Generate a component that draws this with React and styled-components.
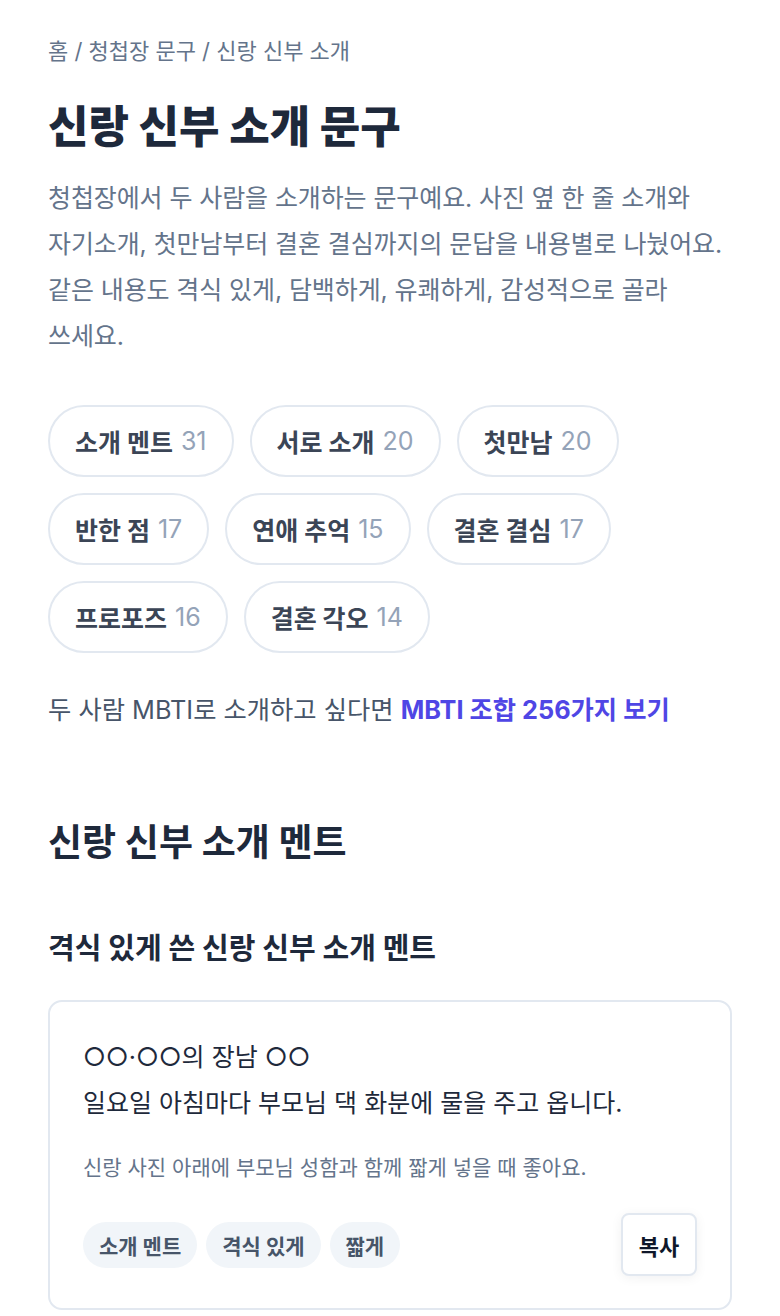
import React from "react";
import styled, { createGlobalStyle } from "styled-components";

const GlobalStyle = createGlobalStyle`
  body {
    margin: 0;
    background: #ffffff;
    font-family: Inter, "Noto Sans CJK KR", sans-serif;
    -webkit-font-smoothing: antialiased;
    word-break: keep-all;
  }
`;

const Page = styled.main`
  padding: 36px 48px 40px;
  box-sizing: border-box;
  width: 780px;
`;

const Breadcrumb = styled.nav`
  font-size: 22px;
  line-height: 30px;
  color: #64748b;
`;

const Title = styled.h1`
  margin: 34px 0 0;
  font-size: 44px;
  line-height: 54px;
  font-weight: 800;
  color: #1e293b;
`;

const Lead = styled.p`
  margin: 21px 0 0;
  font-size: 25px;
  line-height: 46px;
  color: #64748b;
  letter-spacing: -0.1px;
`;

const ChipList = styled.div`
  margin-top: 46px;
  display: flex;
  flex-wrap: wrap;
  gap: 16px;
  max-width: 620px;
`;

const Chip = styled.button`
  height: 72px;
  padding: 0 25px;
  display: inline-flex;
  align-items: center;
  gap: 8px;
  border: 2px solid #e2e8f0;
  border-radius: 999px;
  background: #fff;
  font-family: inherit;
  font-size: 25px;
  font-weight: 700;
  color: #3b4556;
  cursor: pointer;
`;

const Count = styled.span`
  font-weight: 400;
  color: #94a3b8;
`;

const MbtiLine = styled.p`
  margin: 40px 0 0;
  font-size: 25.3px;
  line-height: 34px;
  color: #475569;
`;

const MbtiLink = styled.a`
  color: #4f46e5;
  font-weight: 700;
  text-decoration: none;
`;

const SectionTitle = styled.h2`
  margin: 92px 0 0;
  font-size: 37px;
  line-height: 48px;
  font-weight: 700;
  color: #1e293b;
`;

const SubTitle = styled.h3`
  margin: 63px 0 0;
  font-size: 29px;
  line-height: 38px;
  font-weight: 700;
  color: #1e293b;
`;

const Card = styled.article`
  margin-top: 32px;
  border: 2px solid #e2e8f0;
  border-radius: 14px;
  padding: 32px 33px;
  display: flex;
  flex-direction: column;
`;

const Phrase = styled.p`
  margin: 0;
  font-size: 25px;
  line-height: 46px;
  color: #1e293b;
`;

const Note = styled.p`
  margin: 27px 0 0;
  font-size: 21px;
  line-height: 30px;
  color: #64748b;
`;

const Footer = styled.div`
  margin-top: 30px;
  display: flex;
  align-items: center;
  justify-content: space-between;
`;

const Tags = styled.div`
  display: flex;
  gap: 9px;
`;

const Tag = styled.span`
  height: 46px;
  padding: 0 16px;
  display: inline-flex;
  align-items: center;
  border-radius: 999px;
  background: #f1f5f9;
  font-size: 21px;
  font-weight: 700;
  color: #475569;
`;

const CopyButton = styled.button`
  width: 76px;
  height: 63px;
  border: 2px solid #e2e8f0;
  border-radius: 8px;
  background: #fff;
  box-shadow: 0 2px 12px rgba(15, 23, 42, 0.06);
  font-family: inherit;
  font-size: 22px;
  font-weight: 700;
  color: #0f172a;
  cursor: pointer;
`;

const chips = [
  ["소개 멘트", 31],
  ["서로 소개", 20],
  ["첫만남", 20],
  ["반한 점", 17],
  ["연애 추억", 15],
  ["결혼 결심", 17],
  ["프로포즈", 16],
  ["결혼 각오", 14],
];

export default function App() {
  return (
    <Page>
      <GlobalStyle />
      <Breadcrumb>홈 / 청첩장 문구 / 신랑 신부 소개</Breadcrumb>
      <Title>신랑 신부 소개 문구</Title>
      <Lead>
        청첩장에서 두 사람을 소개하는 문구예요. 사진 옆 한 줄 소개와
        자기소개, 첫만남부터 결혼 결심까지의 문답을 내용별로 나눴어요.
        같은 내용도 격식 있게, 담백하게, 유쾌하게, 감성적으로 골라
        쓰세요.
      </Lead>
      <ChipList>
        {chips.map(([label, count]) => (
          <Chip key={label}>
            {label} <Count>{count}</Count>
          </Chip>
        ))}
      </ChipList>
      <MbtiLine>
        두 사람 MBTI로 소개하고 싶다면 <MbtiLink href="#">MBTI 조합 256가지 보기</MbtiLink>
      </MbtiLine>
      <SectionTitle>신랑 신부 소개 멘트</SectionTitle>
      <SubTitle>격식 있게 쓴 신랑 신부 소개 멘트</SubTitle>
      <Card>
        <Phrase>
          ○○·○○의 장남 ○○
          <br />
          일요일 아침마다 부모님 댁 화분에 물을 주고 옵니다.
        </Phrase>
        <Note>신랑 사진 아래에 부모님 성함과 함께 짧게 넣을 때 좋아요.</Note>
        <Footer>
          <Tags>
            <Tag>소개 멘트</Tag>
            <Tag>격식 있게</Tag>
            <Tag>짧게</Tag>
          </Tags>
          <CopyButton>복사</CopyButton>
        </Footer>
      </Card>
    </Page>
  );
}
